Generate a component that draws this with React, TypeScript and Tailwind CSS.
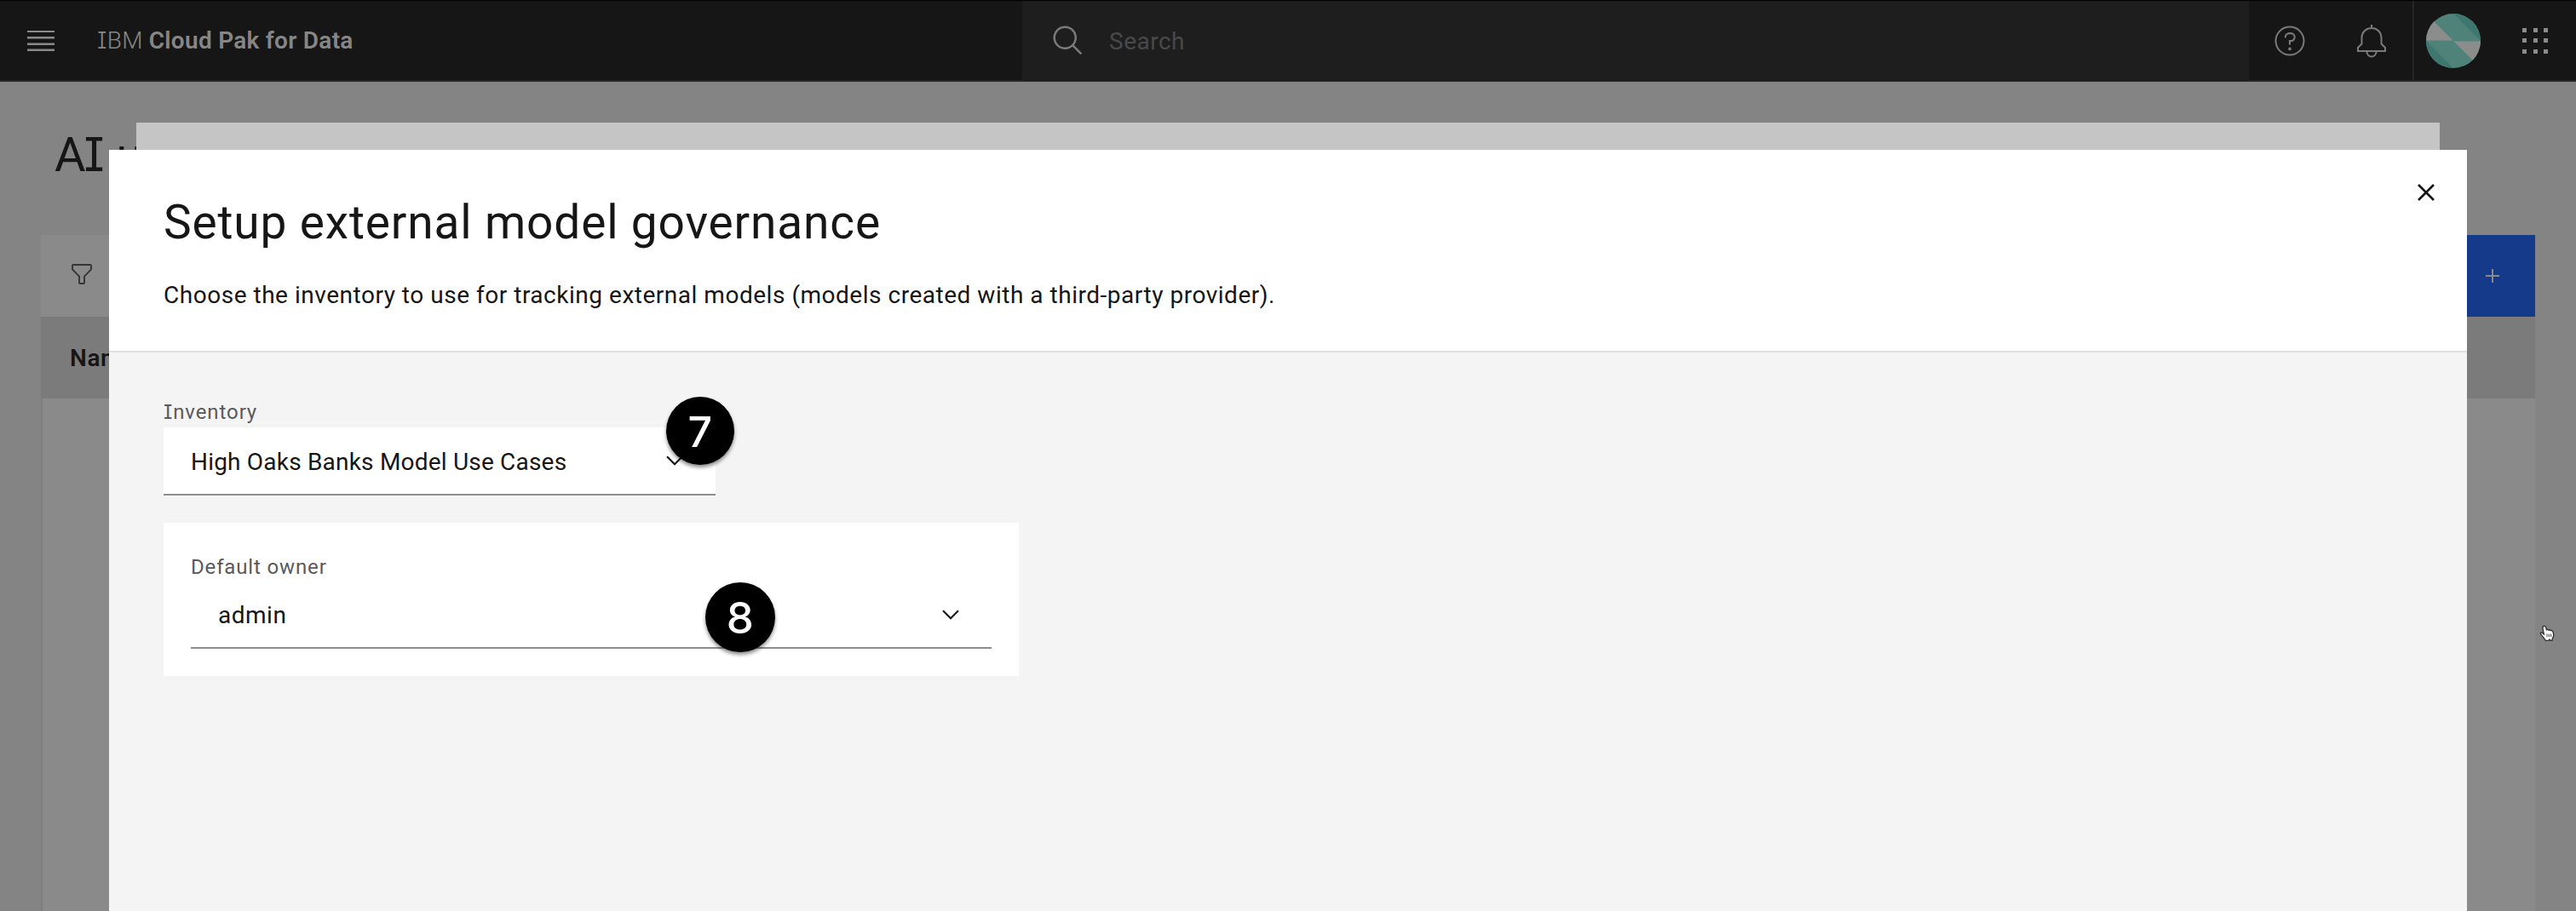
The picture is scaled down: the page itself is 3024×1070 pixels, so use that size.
import type { ReactNode } from "react";

/** Capital I drawn with slab serifs. */
function SlabI({ className = "" }: { className?: string }) {
  return (
    <span className={`font-['Inter',sans-serif] text-[0.975em] leading-[0] [font-feature-settings:'cv08'] ${className}`}>I</span>
  );
}

function MenuIcon() {
  return (
    <svg width="32" height="24" viewBox="0 0 32 24" fill="#8a8a8a">
      <rect width="32" height="2" />
      <rect y="7" width="32" height="2.5" />
      <rect y="14.5" width="32" height="2.5" />
      <rect y="21.5" width="32" height="2.5" />
    </svg>
  );
}

function SearchIcon() {
  return (
    <svg width="40" height="40" viewBox="0 0 32 32" fill="#7a7a7a">
      <path d="M29 27.586l-7.552-7.552a11.018 11.018 0 1 0-1.414 1.414L27.586 29ZM4 13a9 9 0 1 1 9 9A9.010 9.010 0 0 1 4 13Z" />
    </svg>
  );
}

function HelpIcon() {
  return (
    <svg width="40" height="40" viewBox="0 0 32 32" fill="#7a7a7a">
      <path d="M16 2a14 14 0 1 0 14 14A14 14 0 0 0 16 2Zm0 26.400a12.400 12.400 0 1 1 12.400-12.400A12.400 12.400 0 0 1 16 28.400Z" />
      <circle cx="16" cy="23.500" r="1.500" />
      <path d="M17 8h-1.500A4.490 4.490 0 0 0 11 12.500V13h1.700v-.5A2.800 2.800 0 0 1 15.500 9.700H17a2.650 2.650 0 0 1 0 5.400H15.100v4.400h1.700V17a4.500 4.500 0 0 0 .2-9Z" />
    </svg>
  );
}

function BellIcon() {
  return (
    <svg width="40" height="40" viewBox="0 0 40 40" fill="none" stroke="#7a7a7a" strokeWidth="2">
      <path d="M20 1v4M20 5C13.500 5 8.500 9.800 8.500 16v7.500L4 28v4h32v-4l-4.500-4.500V16C31.500 9.800 26.500 5 20 5Z" />
      <path d="M14.500 33a5.500 5.500 0 0 0 11 0" />
    </svg>
  );
}

function Avatar() {
  return (
    <svg className="rounded-full" width="64" height="64" viewBox="0 0 64 64">
      <rect width="64" height="64" fill="#4f837a" />
      <path d="M0 0L32 32H0ZM32 32H64V64Z" fill="#8c8c8c" />
      <path d="M32 0H64V32ZM0 32V64H32Z" fill="#3e776f" />
      <path d="M0 32H64" stroke="#4f837a" strokeWidth="1" />
    </svg>
  );
}

function SwitcherIcon() {
  return (
    <div className="grid grid-cols-3 gap-[7.500px]">
      {Array.from({ length: 9 }, (_, i) => (
        <span key={i} className="size-[5px] bg-[#8c8c8c]" />
      ))}
    </div>
  );
}

function Chevron() {
  return (
    <svg width="20" height="12" viewBox="0 0 20 12" fill="none" stroke="#161616" strokeWidth="2.100">
      <path d="M1 1.200L10 10.200L19 1.200" />
    </svg>
  );
}

function Step({ className, children }: { className: string; children: ReactNode }) {
  return (
    <span
      className={`absolute flex items-center justify-center rounded-full bg-black pt-[2px] font-['Inter',sans-serif] font-medium text-white shadow-[0_3px_4px_rgba(0,0,0,0.450)] ${className}`}
    >
      {children}
    </span>
  );
}

function HandCursor() {
  return (
    <svg className="absolute top-[734px] left-[2981px]" width="19" height="20" viewBox="0 0 19 20">
      <path
        d="M5 1.500c1.300-.6 2.300.2 2.600 1.300l.9 3c.9-.7 2-.4 2.500.3.9-.5 1.900-.2 2.300.5 1-.4 2.200 0 2.600 1.200.6 1.800 1.100 3.600.7 5.400-.3 1.400-1.300 2-1.400 3.100V18l-2.300.2-1-1.200-1.200 1.400H7.400c-.8-1.600-2-2.700-3-4.200-.8-1.300-2.300-2.200-3-3.700-.4-1.300 1.200-2 2.500-.9l1.400 1.100L3.900 3.600C3.700 2.700 4 1.900 5 1.500Z"
        fill="#fff"
        stroke="#333"
        strokeWidth="1.400"
      />
      <path d="M9 10.500v3.500M11.300 10.500v3.500M13.600 10.500v3.500" stroke="#444" strokeWidth="1" />
    </svg>
  );
}

function TopBar() {
  return (
    <header className="flex h-24 border-t border-black bg-[#161616]">
      <div className="flex w-[1200px] items-center border-b-2 border-[#262626] pl-8">
        <MenuIcon />
        <div className="ml-[50px] text-[28px] leading-10 text-[#868686]">
          <span className="font-light tracking-[0.300px]"><SlabI />BM</span>{" "}
          <span className="font-semibold tracking-[0.280px]">Cloud Pak for Data</span>
        </div>
      </div>
      <div className="flex w-[1440px] items-center border-b border-[#262626] bg-[#1e1e1e] pl-[34px]">
        <SearchIcon />
        <span className="ml-7 pt-[2px] text-[28px] leading-10 tracking-[0.500px] text-[#494949]">Search</span>
      </div>
      <div className="flex flex-1 items-center border-b-2 border-[#262626]">
        <div className="flex h-full w-[194px] items-center gap-14 border-r-2 border-[#262626] pl-7">
          <HelpIcon />
          <BellIcon />
        </div>
        <div className="flex items-center gap-[49px] pl-[14px]">
          <Avatar />
          <SwitcherIcon />
        </div>
      </div>
    </header>
  );
}

function UseCasesPage() {
  return (
    <main className="px-12">
      <h1 className="flex h-[180px] items-start pt-[50px] pl-4 text-[56px] leading-[72px] font-normal">
        <span>A<SlabI className="-ml-[2px]" /> use cases</span>
      </h1>
      <div className="flex h-24 items-center justify-between bg-[#8a8a8a] pl-9">
        <svg className="mb-1" width="24" height="24" viewBox="0 0 24 24" fill="none" stroke="#343434" strokeWidth="1.900" strokeLinejoin="round">
          <path d="M2 1H22a1 1 0 0 1 1 1V6.400L15 14.600V22a1 1 0 0 1-1 1H10a1 1 0 0 1-1-1V14.600L1 6.400V2a1 1 0 0 1 1-1Z" />
        </svg>
        <button className="flex h-24 w-[400px] items-center justify-end bg-[#153a89] pr-[42px]">
          <svg width="16" height="16" viewBox="0 0 16 16" fill="#8a8a8a">
            <path d="M7 0h2v7h7v2H9v7H7V9H0V7h7Z" />
          </svg>
        </button>
      </div>
      <div className="flex h-24 items-center bg-[#7b7b7b] pt-[2px] pl-[34px] text-[28px] font-semibold tracking-[0.600px]">Name</div>
      <div className="h-[602px] border-l-2 border-[#7e7e7e] bg-[#8a8a8a]" />
    </main>
  );
}

function GovernanceDialog() {
  return (
    <section className="absolute top-[176px] left-32 flex h-[894px] w-[2768px] flex-col bg-white">
      <header className="flex h-[238px] items-start justify-between border-b-2 border-[#e0e0e0] pr-[38px] pl-16">
        <div>
          <h2 className="mt-[49px] text-[55px] leading-[72px] font-[370] tracking-[0.850px]">Setup external model governance</h2>
          <p className="mt-[30px] text-[28px] leading-10 tracking-[0.520px]">
            Choose the inventory to use for tracking external models (models created with a third-party provider).
          </p>
        </div>
        <svg className="mt-10" width="20" height="20" viewBox="0 0 20 20" fill="none" stroke="#161616" strokeWidth="2.600">
          <path d="M1 1L19 19M19 1L1 19" />
        </svg>
      </header>
      <div className="flex-1 bg-[#f4f4f4] px-16 pt-[54px]">
        <label className="block h-[34px] text-[24px] leading-8 tracking-[0.900px] text-[#5a5a5a]"><SlabI />nventory</label>
        <div className="relative flex h-20 w-[648px] items-center justify-between border-b-2 border-[#8d8d8d] bg-white pr-[38px] pl-8 text-[28px] tracking-[0.200px]">
          <span className="pt-[3px]">High Oaks Banks Model Use Cases</span>
          <Chevron />
          <Step className="-top-9 left-[590px] size-20 text-[50px]">7</Step>
        </div>
        <div className="mt-8 h-[180px] w-[1004px] bg-white px-8 pt-[34px]">
          <label className="block h-[34px] pt-[2px] text-[24px] leading-8 tracking-[0.850px] text-[#5a5a5a]">Default owner</label>
          <div className="relative flex h-20 items-center justify-between border-b-2 border-[#8d8d8d] pr-[38px] pl-8 text-[28px] tracking-[0.500px]">
            <span className="pt-[3px]">admin</span>
            <span className="pt-[2px]"><Chevron /></span>
            <Step className="top-[2px] left-[604px] size-[82px] text-[51px]">8</Step>
          </div>
        </div>
      </div>
    </section>
  );
}

export default function App() {
  return (
    <div className="relative h-[1070px] w-[3024px] overflow-hidden bg-[#848484] font-['Roboto',sans-serif] text-[#161616]">
      <TopBar />
      <UseCasesPage />
      <div className="absolute top-36 left-40 h-8 w-[2704px] bg-[#c5c5c5]" />
      <GovernanceDialog />
      <HandCursor />
    </div>
  );
}
